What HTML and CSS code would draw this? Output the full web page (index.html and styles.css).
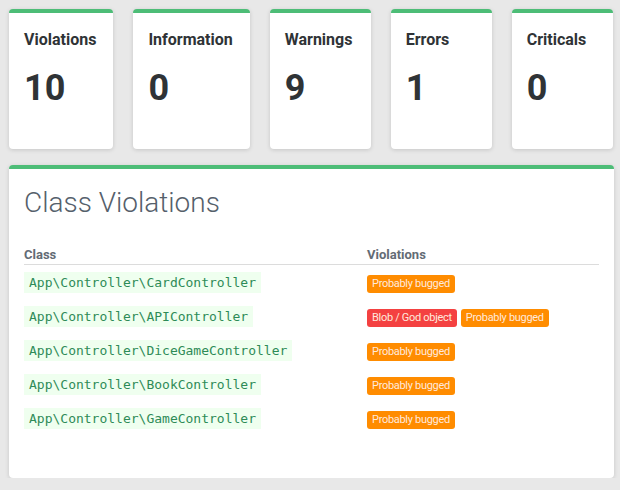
FILE: index.html
```html
<!DOCTYPE html>
<html>
<head>
<meta charset="utf-8">
<link rel="stylesheet" href="styles.css">
</head>
<body>
<div class="cards">
  <div class="card"><div class="card-title">Violations</div><div class="card-num">10</div></div>
  <div class="card"><div class="card-title">Information</div><div class="card-num">0</div></div>
  <div class="card"><div class="card-title">Warnings</div><div class="card-num">9</div></div>
  <div class="card"><div class="card-title">Errors</div><div class="card-num">1</div></div>
  <div class="card"><div class="card-title">Criticals</div><div class="card-num">0</div></div>
</div>
<div class="panel">
  <h2 class="panel-title">Class Violations</h2>
  <table class="vtable">
    <thead>
      <tr><th class="col-class">Class</th><th>Violations</th></tr>
    </thead>
    <tbody>
      <tr><td><code class="cls">App\Controller\CardController</code></td><td><span class="badge warn">Probably bugged</span></td></tr>
      <tr><td><code class="cls">App\Controller\APIController</code></td><td><span class="badge err">Blob / God object</span><span class="badge warn">Probably bugged</span></td></tr>
      <tr><td><code class="cls">App\Controller\DiceGameController</code></td><td><span class="badge warn">Probably bugged</span></td></tr>
      <tr><td><code class="cls">App\Controller\BookController</code></td><td><span class="badge warn">Probably bugged</span></td></tr>
      <tr><td><code class="cls">App\Controller\GameController</code></td><td><span class="badge warn">Probably bugged</span></td></tr>
    </tbody>
  </table>
</div>
</body>
</html>
```
FILE: styles.css
```css
html, body {
  margin: 0;
  padding: 0;
}
body {
  background: #e8e8e8;
  font-family: Roboto, "Liberation Sans", sans-serif;
  color: #2f3336;
  padding: 9px 6px 0 9px;
  overflow: hidden;
}
.cards {
  display: flex;
  gap: 20px;
}
.card {
  background: #fff;
  border-top: 4px solid #4dbd77;
  border-radius: 4px;
  box-shadow: 0 1px 4px rgba(0, 0, 0, 0.15);
  padding: 17px 17px 0 15px;
  min-width: 101px;
  box-sizing: border-box;
  height: 140px;
  flex: none;
}
.card-title {
  font-size: 16px;
  font-weight: 700;
  line-height: 1.2;
  color: #2f3336;
  white-space: nowrap;
}
.card-num {
  font-size: 36px;
  font-weight: 700;
  line-height: 1;
  margin-top: 21px;
  color: #2f3336;
}
.panel {
  margin-top: 16px;
  width: 605px;
  box-sizing: border-box;
  background: #fff;
  border-top: 4px solid #4dbd77;
  border-radius: 4px;
  box-shadow: 0 1px 4px rgba(0, 0, 0, 0.15);
  padding: 16px 15px 43px 15px;
}
.panel-title {
  margin: 0;
  font-size: 28px;
  font-weight: 300;
  line-height: 36px;
  color: #55606b;
}
.vtable {
  margin-top: 25px;
  width: 100%;
  border-collapse: collapse;
}
.vtable th {
  text-align: left;
  font-size: 13px;
  font-weight: 700;
  line-height: 18px;
  color: #636b75;
  padding: 0;
  border-bottom: 1px solid #dcdcdc;
}
.vtable .col-class {
  width: 343px;
}
.vtable td {
  height: 34px;
  padding: 0;
  vertical-align: middle;
}
.cls {
  font-family: "DejaVu Sans Mono", monospace;
  font-size: 13px;
  line-height: 15px;
  display: inline-block;
  padding: 3px 5px;
  background: #efffef;
  color: #2e8b57;
}
.badge {
  display: inline-block;
  font-family: Roboto, "Liberation Sans", sans-serif;
  font-size: 11px;
  line-height: 14px;
  padding: 2px 5px;
  border-radius: 3px;
  color: #ffe9dd;
  margin-right: 4px;
  letter-spacing: -0.3px;
}
.badge.warn {
  background: #ff8c00;
}
.badge.err {
  background: #f44141;
}
```
